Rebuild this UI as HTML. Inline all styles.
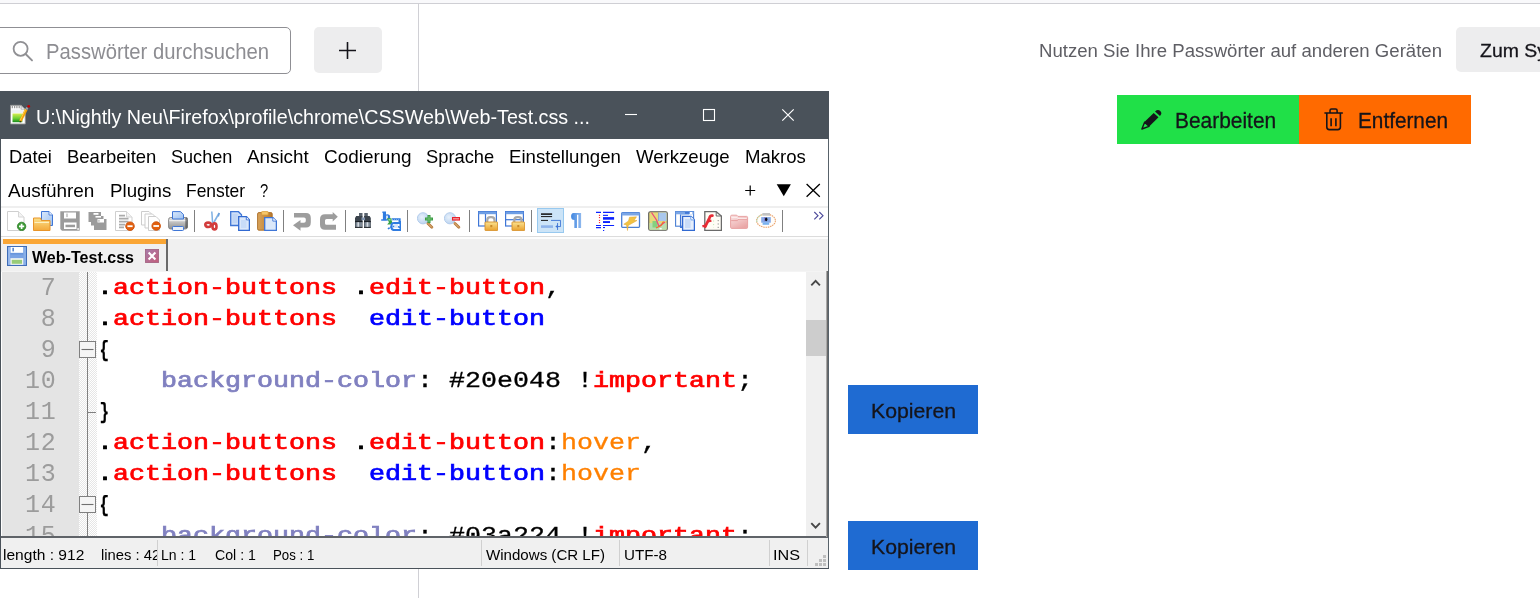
<!DOCTYPE html>
<html lang="de"><head><meta charset="utf-8"><title>about:logins</title>
<style>
html,body{margin:0;padding:0}
body{width:1540px;height:598px;overflow:hidden;background:#fff;position:relative;font-family:"Liberation Sans",sans-serif}
#root{position:absolute;left:0;top:0;width:1540px;height:598px;overflow:hidden;will-change:transform}
.abs{position:absolute}
.t{position:absolute;white-space:pre;transform-origin:0 0}
.topstrip{position:absolute;left:0;top:0;width:1540px;height:3px;background:#f9f9fb}
.topline{position:absolute;left:0;top:3px;width:1540px;height:1px;background:#cfcfd4}
.vline{position:absolute;left:418px;top:4px;width:1px;height:594px;background:#d0d0d5}
.search{position:absolute;left:-6px;top:27px;width:295px;height:45px;border:1px solid #8f8f94;border-radius:5px;background:#fff}
.plusbtn{position:absolute;left:314px;top:27px;width:68px;height:46px;border-radius:5px;background:#ededee}
.syncbtn{position:absolute;left:1456px;top:27px;width:100px;height:45px;border-radius:5px;background:#ededee}
#npp{position:absolute;left:0;top:0;width:830px;height:598px}
.titlebar{position:absolute;left:0;top:91px;width:829px;height:48px;background:#4a525a}
.menubar{position:absolute;left:1px;top:139px;width:827px;height:68px;background:#fff}
.toolbar{position:absolute;left:1px;top:206px;width:827px;height:31px;background:#fff;border-top:2px solid #efefef;border-bottom:1px solid #dcdcdc;box-sizing:border-box}
.tabbar{position:absolute;left:1px;top:237px;width:827px;height:35px;background:#f0f0f0;border-top:2px solid #fdfdfd;border-bottom:1px solid #f4f4f4;box-sizing:border-box}
.tab{position:absolute;left:3px;top:239px;width:164px;height:32px;background:#f0f0f0}
.taborange{position:absolute;left:3px;top:239px;width:164px;height:5px;background:#faa635}
.tabright{position:absolute;left:166px;top:239px;width:1.5px;height:32px;background:#6a6a6a}
.editor{position:absolute;left:2px;top:272px;width:804px;height:265px;background:#fff;overflow:hidden}
.lnmargin{position:absolute;left:0;top:0;width:77px;height:265px;background:#e4e4e4}
.foldmargin{position:absolute;left:77px;top:0;width:18px;height:265px;background:repeating-conic-gradient(#ffffff 0% 25%,#e6e6e6 0% 50%) 0 0/2px 2px}
.foldline{position:absolute;left:85px;top:0;width:1px;height:265px;background:#808080}
.ln{position:absolute;left:0;width:54.6px;height:31px;line-height:31px;text-align:right;font-family:"Liberation Mono",monospace;font-size:25px;letter-spacing:0.8px;color:#9c9c9c}
.cl{position:absolute;left:95px;height:31px;line-height:31px;white-space:pre;font-family:"Liberation Mono",monospace;font-size:21.5px;transform:scaleX(1.2401);transform-origin:0 0}
.cl .r{-webkit-text-stroke:0.3px currentColor}
.cl b{font-weight:400;-webkit-text-stroke:0.72px currentColor}
.cl b.br{display:inline-block;font-weight:700;-webkit-text-stroke:0.25px currentColor;transform:translateX(0.2px) scaleX(0.6);transform-origin:35% 50%}
.vscroll{position:absolute;left:806px;top:272px;width:20px;height:265px;background:#f0f0f0}
.vthumb{position:absolute;left:806px;top:320px;width:19.5px;height:35.6px;background:#cdcdcd}
.statusline{position:absolute;left:1px;top:536px;width:828px;height:2px;background:#5f6368}
.statusbar{position:absolute;left:1px;top:538px;width:828px;height:30px;background:#f0f0f0}
.bl{position:absolute;left:0;top:139px;width:1px;height:430px;background:#4a525a}
.br1{position:absolute;left:826px;top:271px;width:1px;height:266px;background:#a8a8a8}
.br2{position:absolute;left:827px;top:271px;width:1px;height:266px;background:#6a6a6a}
.br3{position:absolute;left:828px;top:139px;width:1px;height:430px;background:#58626a}
.bb{position:absolute;left:0;top:567.5px;width:829px;height:1.5px;background:#4a525a}
</style></head>
<body>
<div id="root"><div class="topstrip"></div><div class="topline"></div><div class="vline"></div><div class="search"></div><svg class="abs" style="left:12px;top:39.5px" width="22" height="22" viewBox="0 0 22 22"><circle cx="8.6" cy="8.8" r="7" fill="none" stroke="#909094" stroke-width="1.8"/><path d="M13.6 14 L20 20.4" stroke="#909094" stroke-width="1.9" stroke-linecap="round"/></svg><span class="t" style="left:46px;top:39px;line-height:25px;font-size:22.2px;color:#8d8d92;transform:scaleX(0.9132);">Passwörter durchsuchen</span><div class="plusbtn"></div><svg class="abs" style="left:339px;top:42px" width="17" height="17" viewBox="0 0 17 17"><path d="M8.5 0.5V16.5M0.5 8.5H16.5" stroke="#15141a" stroke-width="1.6" stroke-linecap="round"/></svg><span class="t" style="left:1039px;top:40px;line-height:21px;font-size:18.9px;color:#5e5e64;transform:scaleX(0.9841);">Nutzen Sie Ihre Passwörter auf anderen Geräten</span><div class="syncbtn"></div><span class="t" style="left:1480px;top:40px;line-height:21px;font-size:18.9px;color:#15141a;transform:scaleX(1.0295);-webkit-text-stroke:0.3px #15141a;">Zum Sy</span><div class="abs" style="left:1117px;top:95px;width:182px;height:48.6px;background:#20e048"></div><div class="abs" style="left:1299px;top:95px;width:172px;height:48.6px;background:#ff6a00"></div><span class="t" style="left:1175px;top:108px;line-height:25px;font-size:22.2px;color:#15141a;transform:scaleX(0.9429);-webkit-text-stroke:0.3px #15141a;">Bearbeiten</span><span class="t" style="left:1357.5px;top:108px;line-height:25px;font-size:22.2px;color:#15141a;transform:scaleX(0.9354);-webkit-text-stroke:0.3px #15141a;">Entfernen</span><svg class="abs" style="left:1135px;top:103px" width="35" height="32" viewBox="0 0 35 32"><path d="M9.4 19L18.7 9.9L23.5 14.2L14.2 23.5Z" fill="#15141a"/><path d="M9.6 19.2L6.9 26L14 23.3Z" fill="none" stroke="#15141a" stroke-width="1.4" stroke-linejoin="round"/><path d="M20 8.4L25 13Q27.6 10.4 25.3 8.1Q23 5.8 20 8.4Z" fill="#15141a"/></svg><svg class="abs" style="left:1318px;top:103px" width="35" height="32" viewBox="0 0 35 32"><path d="M7 10H24.3" stroke="#15141a" stroke-width="1.6" stroke-linecap="round"/><path d="M12 10V7.6Q12 6.1 13.5 6.1H17.6Q19.1 6.1 19.1 7.6V10" fill="none" stroke="#15141a" stroke-width="1.5"/><path d="M8.8 10V24Q8.8 26.6 11.4 26.6H19.8Q22.4 26.6 22.4 24V10" fill="none" stroke="#15141a" stroke-width="1.6"/><path d="M13.1 15.2V23.2M17.9 15.2V23.2" stroke="#15141a" stroke-width="1.6"/></svg><div class="abs" style="left:848px;top:385px;width:130px;height:49px;background:#1f6bd2"></div><span class="t" style="left:871px;top:400px;line-height:22px;font-size:20.4px;color:#15141a;transform:scaleX(1.0413);-webkit-text-stroke:0.3px #15141a;">Kopieren</span><div class="abs" style="left:848px;top:521px;width:130px;height:49px;background:#1f6bd2"></div><span class="t" style="left:871px;top:536px;line-height:22px;font-size:20.4px;color:#15141a;transform:scaleX(1.0413);-webkit-text-stroke:0.3px #15141a;">Kopieren</span><div id="npp"><div class="titlebar"></div><svg class="abs" style="left:10px;top:104px" width="21" height="21" viewBox="0 0 21 21"><defs><linearGradient id="gN" x1="0" y1="0" x2="0" y2="1"><stop offset="0" stop-color="#d6ec52"/><stop offset="0.55" stop-color="#6fd033"/><stop offset="1" stop-color="#168a1c"/></linearGradient></defs><path d="M0.5 1.3H11L15.3 5.5V20H0.5Z" fill="#fff" stroke="#8d8d8d" stroke-width="0.9"/><path d="M11 1.3V5.5H15.3Z" fill="#e2e2e2" stroke="#8d8d8d" stroke-width="0.7"/><path d="M2.3 1.9V4.3M4.6 1.9V4.3M6.9 1.9V4.3M9.2 1.9V4.3" stroke="#9a9a9a" stroke-width="1.3"/><rect x="1.4" y="5.5" width="13" height="3.6" fill="#eef1f4"/><rect x="2.5" y="9.5" width="9.8" height="8.7" fill="url(#gN)"/><path d="M10.4 17.2L16.3 5.4" stroke="#f2a20a" stroke-width="2.8"/><path d="M10 16.6L15.6 5.2" stroke="#fbd04a" stroke-width="0.9"/><path d="M16.3 5.4L17.3 3.5" stroke="#9aa0ac" stroke-width="2.4"/><circle cx="18.7" cy="2.3" r="1.4" fill="#c40000"/><path d="M9.7 18.6L11.4 17.9L9.9 16.4Z" fill="#3a2a10"/></svg><span class="t" style="left:36px;top:106px;line-height:22px;font-size:20.4px;color:#fff;transform:scaleX(0.9656);">U:\Nightly Neu\Firefox\profile\chrome\CSSWeb\Web-Test.css ...</span><svg class="abs" style="left:600px;top:91px" width="229" height="48" viewBox="0 0 229 48"><path d="M25 23.5H37" stroke="#fff" stroke-width="1.1"/><rect x="103.5" y="18.5" width="11" height="11" fill="none" stroke="#fff" stroke-width="1.1"/><path d="M182.3 18.3L193.7 29.7M193.7 18.3L182.3 29.7" stroke="#fff" stroke-width="1.2"/></svg><div class="menubar"></div><span class="t" style="left:9px;top:147px;line-height:20px;font-size:17.8px;color:#000;transform:scaleX(1.0309);">Datei</span><span class="t" style="left:67.4px;top:147px;line-height:20px;font-size:17.8px;color:#000;transform:scaleX(1.0393);">Bearbeiten</span><span class="t" style="left:171.3px;top:147px;line-height:20px;font-size:17.8px;color:#000;transform:scaleX(1.0164);">Suchen</span><span class="t" style="left:247.3px;top:147px;line-height:20px;font-size:17.8px;color:#000;transform:scaleX(1.0581);">Ansicht</span><span class="t" style="left:323.7px;top:147px;line-height:20px;font-size:17.8px;color:#000;transform:scaleX(1.0663);">Codierung</span><span class="t" style="left:426px;top:147px;line-height:20px;font-size:17.8px;color:#000;transform:scaleX(1.0297);">Sprache</span><span class="t" style="left:509.4px;top:147px;line-height:20px;font-size:17.8px;color:#000;transform:scaleX(1.0479);">Einstellungen</span><span class="t" style="left:636.3px;top:147px;line-height:20px;font-size:17.8px;color:#000;transform:scaleX(1.0456);">Werkzeuge</span><span class="t" style="left:745px;top:147px;line-height:20px;font-size:17.8px;color:#000;transform:scaleX(1.0447);">Makros</span><span class="t" style="left:8.2px;top:181px;line-height:20px;font-size:17.8px;color:#000;transform:scaleX(1.0658);">Ausführen</span><span class="t" style="left:109.9px;top:181px;line-height:20px;font-size:17.8px;color:#000;transform:scaleX(1.0527);">Plugins</span><span class="t" style="left:186.3px;top:181px;line-height:20px;font-size:17.8px;color:#000;transform:scaleX(0.9804);">Fenster</span><span class="t" style="left:260.4px;top:181px;line-height:20px;font-size:17.8px;color:#000;transform:scaleX(0.8291);">?</span><svg class="abs" style="left:740px;top:180px" width="86" height="22" viewBox="0 0 86 22"><path d="M10.2 5.5V15.5M5.2 10.5H15.2" stroke="#000" stroke-width="1.2"/><path d="M36.7 4.3H50.9L43.8 16.3Z" fill="#000"/><path d="M66.6 4L79.8 16.8M79.8 4L66.6 16.8" stroke="#000" stroke-width="1.3"/></svg><div class="toolbar"></div><svg width="0" height="0" style="position:absolute"><defs>
<linearGradient id="gF" x1="0" y1="0" x2="0" y2="1"><stop offset="0" stop-color="#fbe08a"/><stop offset="1" stop-color="#f3a93a"/></linearGradient>
<linearGradient id="gB" x1="0" y1="0" x2="1" y2="1"><stop offset="0" stop-color="#dbe9fb"/><stop offset="1" stop-color="#9cc0f0"/></linearGradient>
<linearGradient id="gP" x1="0" y1="0" x2="0" y2="1"><stop offset="0" stop-color="#e6e6e6"/><stop offset="0.5" stop-color="#b9b9b9"/><stop offset="1" stop-color="#8f8f8f"/></linearGradient>
<linearGradient id="gL" x1="0" y1="0" x2="0" y2="1"><stop offset="0" stop-color="#fbe391"/><stop offset="1" stop-color="#e9a02c"/></linearGradient>
<linearGradient id="gC" x1="0" y1="0" x2="1" y2="0"><stop offset="0" stop-color="#d9a35a"/><stop offset="1" stop-color="#b87a2e"/></linearGradient>
<linearGradient id="gQ" x1="0" y1="0" x2="1" y2="0"><stop offset="0" stop-color="#3f86e0"/><stop offset="1" stop-color="#8fb8ee"/></linearGradient>
<radialGradient id="gZ" cx="0.4" cy="0.4" r="0.7"><stop offset="0" stop-color="#e8f1fb"/><stop offset="1" stop-color="#b5cfee"/></radialGradient>
</defs></svg>
<svg class="abs" style="left:7px;top:211px" width="20" height="20" viewBox="0 0 20 20"><path d="M0.5 0.5H11.5L17 6V19.5H0.5Z" fill="#fff" stroke="#cfcfcf"/><path d="M11.5 0.5V6H17" fill="#f4f4f4" stroke="#d6d6d6"/><circle cx="14.6" cy="15.4" r="4.2" fill="#3d9b35"/><circle cx="14.6" cy="15.4" r="4.2" fill="none" stroke="#2d7d28" stroke-width="0.8"/><path d="M14.6 12.8V18M12 15.4H17.2" stroke="#fff" stroke-width="1.7"/></svg>
<svg class="abs" style="left:33px;top:211px" width="20" height="20" viewBox="0 0 20 20"><path d="M8.5 0.5H16L19.5 4V14.5H8.5Z" fill="url(#gB)" stroke="#3f76d6"/><path d="M16 0.5V4H19.5" fill="#eef4fd" stroke="#3f76d6" stroke-width="0.8"/><path d="M0.5 7H7.5L8.5 9.5H17V19.5H0.5Z" fill="url(#gF)" stroke="#e8952a"/><path d="M1.5 11.5H16" stroke="#fdf0c0" stroke-width="1"/></svg>
<svg class="abs" style="left:60px;top:211px" width="20" height="20" viewBox="0 0 20 20"><path d="M0.3 0.3H19.7V19.7H2L0.3 18Z" fill="#9b9b9b"/><rect x="4" y="1.5" width="12" height="6" fill="#fff"/><rect x="6.5" y="2.5" width="1" height="3.6" fill="#9b9b9b"/><rect x="4" y="11.5" width="12.5" height="6.5" fill="#fff"/><rect x="5.5" y="13.7" width="9.5" height="2.5" fill="#9b9b9b"/><rect x="17.3" y="17.2" width="1.6" height="1.6" fill="#fff"/></svg>
<svg class="abs" style="left:87.5px;top:211px" width="19" height="20" viewBox="0 0 19 20"><path d="M0.5 1H13V5H15.5V8H18.5V19H6V14.5H3V11H0.5Z" fill="#9b9b9b"/><rect x="5.5" y="2" width="5" height="1.8" fill="#fff"/><rect x="7.5" y="5" width="5.5" height="1.6" fill="#fff"/><rect x="9.5" y="8" width="6.5" height="3.5" fill="#fff"/><rect x="10.5" y="8.8" width="0.9" height="2" fill="#9b9b9b"/></svg>
<svg class="abs" style="left:115px;top:211px" width="20" height="20" viewBox="0 0 20 20"><path d="M0.5 0.5H11.5L17 6V19.5H0.5Z" fill="#fff" stroke="#cfcfcf"/><path d="M11.5 0.5V6H17" fill="#f4f4f4" stroke="#d6d6d6"/><path d="M4 4.6H10M4 7.6H13.5M4 10.6H13.5M4 13.6H10M4 16.4H9" stroke="#ababab" stroke-width="1.6"/><circle cx="15" cy="15.2" r="4.3" fill="#e2600f"/><circle cx="15" cy="15.2" r="4.3" fill="none" stroke="#c94c06" stroke-width="0.8"/><path d="M12.4 15.2H17.6" stroke="#fff" stroke-width="1.8"/></svg>
<svg class="abs" style="left:141px;top:211px" width="20" height="20" viewBox="0 0 20 20"><path d="M0.5 0.5H8L11 3.5V14H0.5Z" fill="#fff" stroke="#cdcdcd"/><path d="M4 3H11.5L14.5 6V17H4Z" fill="#fff" stroke="#cdcdcd"/><path d="M7.5 5.5H15L18.5 9V19.5H7.5Z" fill="#fff" stroke="#cdcdcd"/><circle cx="15.2" cy="15" r="4.3" fill="#e2600f"/><circle cx="15.2" cy="15" r="4.3" fill="none" stroke="#c94c06" stroke-width="0.8"/><path d="M12.4 15H18" stroke="#fff" stroke-width="1.8"/></svg>
<svg class="abs" style="left:168px;top:211px" width="20" height="20" viewBox="0 0 20 20"><rect x="0.6" y="6.5" width="18.8" height="11.5" rx="2" fill="url(#gP)" stroke="#7f7f7f" stroke-width="0.9"/><path d="M4.5 8V0.6H12.5L15.5 3.6V8Z" fill="url(#gB)" stroke="#3f76d6"/><rect x="1.2" y="9" width="17.6" height="1.2" fill="#f4f4f4" opacity="0.8"/><rect x="4.5" y="15.5" width="11" height="4" rx="0.8" fill="#e9f1fc" stroke="#3f76d6"/><rect x="17.3" y="6.2" width="2.3" height="11" rx="1" fill="#3a3a3a" opacity="0.55"/></svg>
<svg class="abs" style="left:204px;top:211px" width="17" height="20" viewBox="0 0 17 20"><path d="M7.8 0.5L8.6 12" stroke="#7fb0e3" stroke-width="1.5"/><path d="M15.2 2L9.2 12.5" stroke="#7fb0e3" stroke-width="1.6"/><path d="M15.2 2L14.6 5.5" stroke="#5a93d6" stroke-width="1"/><ellipse cx="4.2" cy="13.8" rx="2.9" ry="2.2" fill="none" stroke="#d23c3c" stroke-width="2.6"/><ellipse cx="10.5" cy="15.4" rx="2" ry="3" fill="none" stroke="#d23c3c" stroke-width="2.6"/></svg>
<svg class="abs" style="left:230px;top:211px" width="20" height="20" viewBox="0 0 20 20"><path d="M0.7 0.7H8.5L11.5 3.7V14.5H0.7Z" fill="#cfe0f8" stroke="#3f76d6" stroke-width="1.3"/><path d="M8.7 5.7H16.5L19.4 8.7V19.4H8.7Z" fill="#dbe8fa" stroke="#3169d1" stroke-width="1.3"/><path d="M16.3 5.7V8.9H19.4" fill="#fff" stroke="#3169d1" stroke-width="0.9"/><rect x="11" y="9" width="5.5" height="8" fill="#c1d7f6" opacity="0.7"/><rect x="2.5" y="3" width="5" height="9" fill="#bad2f4" opacity="0.7"/></svg>
<svg class="abs" style="left:257px;top:211px" width="20" height="20" viewBox="0 0 20 20"><rect x="0.6" y="1.6" width="14.6" height="17.6" rx="1.3" fill="url(#gC)" stroke="#a96a22" stroke-width="0.9"/><rect x="4.6" y="0.4" width="6.6" height="3.6" rx="0.8" fill="#f6c66a" stroke="#d79a35" stroke-width="0.8"/><path d="M7.7 6.7H16L19.4 10V19.4H7.7Z" fill="#dbe8fa" stroke="#3f76d6" stroke-width="1.3"/><path d="M15.8 6.7V10.1H19.4" fill="#fff" stroke="#3f76d6" stroke-width="0.9"/></svg>
<svg class="abs" style="left:293px;top:213px" width="18" height="18" viewBox="0 0 18 18"><path d="M1 0H13Q17.8 0 17.8 5V9.5Q17.8 14.5 13 14.5H7.5V17.8L0 12.2L7.5 7V9.7H11Q12.8 9.7 12.8 8V6.2Q12.8 4.6 11 4.6H1Z" fill="#9d9d9d"/></svg>
<svg class="abs" style="left:320px;top:212px" width="18" height="18" viewBox="0 0 18 18"><path d="M12.7 0L17.8 4.7L12.7 9.6V6.9H6.6Q5 6.9 5 8.4V11.2Q5 12.7 6.6 12.7H16V17.8H5Q0 17.8 0 12.7V7.3Q0 2.3 5 2.3H12.7Z" fill="#9d9d9d"/></svg>
<svg class="abs" style="left:355px;top:213px" width="16" height="15" viewBox="0 0 16 15"><rect x="4" y="0" width="3.5" height="3.6" fill="#59636e"/><rect x="9.3" y="0" width="3.5" height="3.6" fill="#59636e"/><path d="M1.2 3H7.5V14.6H0V5Z" fill="#3b434c"/><path d="M14.6 3H9V14.6H15.8V5Z" fill="#3b434c"/><rect x="6.5" y="4.5" width="3.5" height="2.6" fill="#7f92ad"/><rect x="0" y="8" width="7.5" height="1.2" fill="#1d2227"/><rect x="9" y="8" width="6.8" height="1.2" fill="#1d2227"/><rect x="0.6" y="9.2" width="6.4" height="4.8" fill="#7c8793"/><rect x="9.5" y="9.2" width="5.8" height="4.8" fill="#7c8793"/><rect x="2.4" y="9.2" width="1.7" height="4.8" fill="#d5dbe2"/><rect x="11.6" y="9.2" width="1.7" height="4.8" fill="#d5dbe2"/><rect x="0" y="13.9" width="7.5" height="0.9" fill="#14181c"/><rect x="9" y="13.9" width="6.8" height="0.9" fill="#14181c"/></svg>
<svg class="abs" style="left:381px;top:211px" width="20" height="20" viewBox="0 0 20 20"><path d="M1.4 0.4H5V3.4Q9.2 2.6 9.2 6.3Q9.2 9.8 5 9.8H0.2V8.2H1.9V2H1.4Z" fill="#2f7be0"/><rect x="5" y="4.6" width="2" height="3.6" fill="#cfe0f8"/><path d="M5.8 7.2H10.6V9.6L11.4 11.4L9.6 13.6H6.2L8 11.2Z" fill="#38a348"/><path d="M7.5 8H9.5V9.5H7.5Z" fill="#9ad6a0"/><path d="M11 8.2H18.6V12H13Q10.5 12 10.5 14.3V16.6Q10.5 19 13 19H19.6V10" stroke="#2f7be0" stroke-width="2.1" fill="none"/><path d="M7 18Q11.5 13.6 19.6 16.6" stroke="#2f7be0" stroke-width="1.6" fill="none" stroke-dasharray="2 0.7"/><path d="M13.3 13H17V17H13.3Z" fill="#d9e6f9"/><path d="M11 8.6H18.6" stroke="#7fb0ee" stroke-width="1" stroke-dasharray="1 1"/></svg>
<svg class="abs" style="left:417px;top:212px" width="17" height="17" viewBox="0 0 17 17"><circle cx="6" cy="6.3" r="5.6" fill="url(#gZ)" stroke="#b4cdec" stroke-width="1"/><path d="M11 11.5L14.8 15.3" stroke="#b5793a" stroke-width="2.8" stroke-linecap="round"/><path d="M11 11.5L14.8 15.3" stroke="#e7c08d" stroke-width="1" stroke-linecap="round"/><path d="M12 3V11M8 7H16" stroke="#3c9c45" stroke-width="3"/><path d="M12 4V10M9 7H15" stroke="#6cc172" stroke-width="1.2"/></svg>
<svg class="abs" style="left:444px;top:212px" width="17" height="17" viewBox="0 0 17 17"><circle cx="6" cy="6.3" r="5.6" fill="url(#gZ)" stroke="#b4cdec" stroke-width="1"/><path d="M11 11.5L14.8 15.3" stroke="#b5793a" stroke-width="2.8" stroke-linecap="round"/><path d="M11 11.5L14.8 15.3" stroke="#e7c08d" stroke-width="1" stroke-linecap="round"/><rect x="8" y="5" width="8" height="3.6" fill="#e8232d"/><rect x="9" y="6" width="6" height="1.5" fill="#f48a8f"/></svg>
<svg class="abs" style="left:478px;top:211px" width="20" height="20" viewBox="0 0 20 20"><rect x="0.6" y="0.6" width="17.8" height="14.4" fill="#fff" stroke="#3f76d6" stroke-width="1.2"/><rect x="0.6" y="0.6" width="17.8" height="2.6" fill="#6f9fe4"/><path d="M7.5 3V15" stroke="#3f76d6" stroke-width="1.2"/><path d="M9.3 12V9Q9.3 6.2 12.3 6.2H13.5Q16.5 6.2 16.5 9V12" fill="none" stroke="#a9a9a9" stroke-width="2.2"/><rect x="7" y="11" width="12.6" height="8.6" rx="0.6" fill="url(#gL)" stroke="#d8922a" stroke-width="0.9"/><rect x="12.3" y="14" width="2" height="2.2" fill="#c98a2a"/></svg>
<svg class="abs" style="left:505px;top:211px" width="20" height="20" viewBox="0 0 20 20"><rect x="0.6" y="0.6" width="17.8" height="14.4" fill="#fff" stroke="#3f76d6" stroke-width="1.2"/><rect x="0.6" y="0.6" width="17.8" height="2.6" fill="#6f9fe4"/><path d="M0.6 8.7H18.4" stroke="#3f76d6" stroke-width="1.2"/><path d="M9.3 12V9Q9.3 6.2 12.3 6.2H13.5Q16.5 6.2 16.5 9V12" fill="none" stroke="#a9a9a9" stroke-width="2.2"/><rect x="7" y="11" width="12.6" height="8.6" rx="0.6" fill="url(#gL)" stroke="#d8922a" stroke-width="0.9"/><rect x="12.3" y="14" width="2" height="2.2" fill="#c98a2a"/></svg>
<div class="abs" style="left:537px;top:208px;width:27px;height:25px;box-sizing:border-box;background:#cce4f7;border:1px solid #98c9ef"></div>
<svg class="abs" style="left:541px;top:211px" width="20" height="20" viewBox="0 0 20 20"><rect x="0" y="2.3" width="11.1" height="1.6" fill="#1a1a1a"/><rect x="0" y="5" width="11.1" height="1.1" fill="#2a2a2a"/><rect x="0" y="8.9" width="7" height="1" fill="#1a1a1a"/><rect x="0" y="14.3" width="12" height="2.6" fill="#8eb4ea"/><path d="M10 9.4H19.6V15.55H16.5" fill="none" stroke="#3f76d6" stroke-width="0.95"/><path d="M14.3 15.55L17 13.6V17.5Z" fill="#3f76d6"/><path d="M16.55 12V19" stroke="#3f76d6" stroke-width="0.9"/></svg>
<svg class="abs" style="left:570px;top:213px" width="12" height="16" viewBox="0 0 12 16"><path d="M3.5 0H11.1V14.9H8.4V1.8H7V14.9H4.35V7Q1.1 7 1.1 3.5Q1.1 0 3.5 0Z" fill="url(#gQ)"/></svg>
<svg class="abs" style="left:596px;top:211px" width="19" height="21" viewBox="0 0 19 21"><path d="M0 1.4H5M7 1.4H18.1M0 14.5H5M7 14.5H18.1M0 16.55H5" stroke="#0a22ff" stroke-width="1.15"/><rect x="7" y="3.8" width="5" height="1.1" fill="#0a22ff"/><rect x="7" y="6.1" width="11.1" height="2.6" fill="#0a22ff"/><rect x="7" y="10.1" width="7" height="1.9" fill="#0a22ff"/><rect x="7" y="16" width="2" height="1.1" fill="#0a22ff"/><rect x="7" y="19" width="1.2" height="1" fill="#0a22ff"/><rect x="2.9" y="3.8" width="1.2" height="1.1" fill="#ff1a1a"/><rect x="2.9" y="6.1" width="1.2" height="1" fill="#ff1a1a"/><rect x="2.9" y="8.9" width="1.2" height="1" fill="#ff1a1a"/><rect x="2.9" y="11.1" width="1.2" height="1" fill="#ff1a1a"/></svg>
<svg class="abs" style="left:621px;top:212px" width="20" height="19" viewBox="0 0 20 19"><rect x="0.7" y="0.7" width="17.8" height="14.6" rx="0.8" fill="#fff" stroke="#4a7fd4" stroke-width="1.3"/><rect x="0.7" y="0.7" width="17.8" height="2.8" fill="#7aa6e6"/><path d="M8.5 5.2L15.5 4.8L13 8.5L16 8.5L7.2 13.5L6.5 18.5L5.5 13L2.8 12.2L7.5 9Z" fill="#f2c243" stroke="#dca52c" stroke-width="0.5"/></svg>
<svg class="abs" style="left:648px;top:211px" width="20" height="20" viewBox="0 0 20 20"><rect x="0.7" y="0.7" width="18.6" height="18.6" rx="1.5" fill="#e7d97a" stroke="#5a5a5a" stroke-width="1.1"/><rect x="10.5" y="1.5" width="8" height="8.5" fill="#a9c7ec"/><rect x="1.5" y="12" width="17" height="6.8" fill="#b9ddb0"/><rect x="4.5" y="10" width="5" height="6.5" fill="#86d07f"/><path d="M3.5 1.5L8.5 9L11 15.5L17 11" fill="none" stroke="#ee4a7a" stroke-width="1.3"/><path d="M8 17L13 14.5L15.5 10.5" fill="none" stroke="#f26a2e" stroke-width="1.2"/><rect x="11.5" y="17" width="2.2" height="1.4" fill="#fff"/><path d="M10.5 1.5V10" stroke="#7f9fd0" stroke-width="0.8"/></svg>
<svg class="abs" style="left:675px;top:211px" width="20" height="20" viewBox="0 0 20 20"><rect x="0.6" y="0.6" width="18" height="14.6" fill="#fff" stroke="#4a7fd4" stroke-width="1.1"/><rect x="0.6" y="0.6" width="18" height="2.7" fill="#7aa6e6"/><rect x="10" y="1" width="4.6" height="1.8" fill="#3f76d6"/><rect x="14.8" y="1" width="2.6" height="2.2" fill="#fff"/><path d="M5.6 3.3V16.4H8" stroke="#3f76d6" stroke-width="1.3" fill="none"/><path d="M5.6 3.6H14" stroke="#9fc0ee" stroke-width="1"/><path d="M7.6 5.3H16L19.4 8.7V19.3H7.6Z" fill="#e6effc" stroke="#3169d1" stroke-width="1.3"/><path d="M15.8 5.3V8.9H19.4" fill="#fff" stroke="#5a94e6" stroke-width="0.9"/><rect x="10" y="8" width="5.6" height="9" fill="#c3d8f7" opacity="0.85"/></svg>
<svg class="abs" style="left:702px;top:211px" width="20" height="20" viewBox="0 0 20 20"><path d="M2.8 0.7H14.2L19.4 5V19.3H2.8Z" fill="#fffdf6" stroke="#6a6a6a" stroke-width="1.3"/><path d="M14.2 0.7V5H19.4" fill="none" stroke="#6a6a6a" stroke-width="1"/><path d="M10.4 4.6Q8.2 4.2 7.4 7L3.2 15.6" fill="none" stroke="#e62d36" stroke-width="2.8" stroke-linecap="round"/><path d="M0.4 15.4L4.4 14.2M5.6 10.4L9.4 9.6" stroke="#e62d36" stroke-width="2.2"/><path d="M16.2 9V17" stroke="#8a8a8a" stroke-width="1" stroke-dasharray="1.2 2.2"/><path d="M11.6 9.5V17" stroke="#bfe3b0" stroke-width="1" stroke-dasharray="1 2.6"/></svg>
<svg width="0" height="0" style="position:absolute"><defs><linearGradient id="gR" x1="0" y1="0" x2="0.6" y2="1"><stop offset="0" stop-color="#fae4e4"/><stop offset="1" stop-color="#eaa7a7"/></linearGradient></defs></svg>
<svg class="abs" style="left:730px;top:214px" width="19" height="15" viewBox="0 0 19 15"><path d="M0.6 2.4Q0.6 1.2 1.8 1.2H6.8L8 2.4H16.6Q17.6 2.4 17.6 3.6V13.2Q17.6 14.4 16.6 14.4H1.8Q0.6 14.4 0.6 13.2Z" fill="url(#gR)" stroke="#e8a3a3" stroke-width="1"/><path d="M1.2 6.6H7.2L8.8 5.2H17" fill="none" stroke="#e59a9a" stroke-width="0.9"/><path d="M1.4 3.6H7L8 4.4H16.8" fill="none" stroke="#fdf1f1" stroke-width="0.9"/></svg>
<svg class="abs" style="left:756px;top:213px" width="20" height="16" viewBox="0 0 20 16"><ellipse cx="10" cy="7.7" rx="9.4" ry="6.6" fill="#fffdfa" stroke="#eaa56f" stroke-width="1.1" stroke-dasharray="1.6 0.7"/><path d="M0.8 9Q0.6 2.6 8 1.2" fill="none" stroke="#b5dcb8" stroke-width="1.2" stroke-dasharray="1.5 1"/><rect x="6.4" y="0" width="7.6" height="2.7" fill="#c3c3c3"/><rect x="5.2" y="4.1" width="9.6" height="5.6" fill="#86a9e6"/><rect x="6.6" y="9.4" width="6.6" height="2.4" fill="#79b2f0"/><rect x="8" y="4.2" width="1.5" height="4" fill="#7b68c8" opacity="0.7"/><ellipse cx="10.2" cy="6.3" rx="1.2" ry="1.9" fill="#0d0d18"/></svg>
<div class="abs" style="left:194px;top:210px;width:1.3px;height:22px;background:#808080"></div>
<div class="abs" style="left:283px;top:210px;width:1.3px;height:22px;background:#808080"></div>
<div class="abs" style="left:345px;top:210px;width:1.3px;height:22px;background:#808080"></div>
<div class="abs" style="left:407px;top:210px;width:1.3px;height:22px;background:#808080"></div>
<div class="abs" style="left:469px;top:210px;width:1.3px;height:22px;background:#808080"></div>
<div class="abs" style="left:531px;top:210px;width:1.3px;height:22px;background:#808080"></div>
<div class="abs" style="left:782px;top:210px;width:1.3px;height:22px;background:#808080"></div>
<svg class="abs" style="left:813px;top:211px" width="12" height="10" viewBox="0 0 12 10"><path d="M1.3 1L5 4.7L1.3 8.4M6.3 1L10 4.7L6.3 8.4" fill="none" stroke="#4d4a9b" stroke-width="1.15"/></svg><div class="tabbar"></div><div class="tab"></div><div class="taborange"></div><div class="tabright"></div><svg class="abs" style="left:7px;top:246px" width="20" height="20" viewBox="0 0 20 20"><rect x="0.5" y="0.5" width="19" height="19" fill="#7aa3e4" stroke="#3f6db8"/><rect x="1.3" y="1.3" width="1.6" height="17.4" fill="#a9c6f0" opacity="0.8"/><rect x="3.6" y="1" width="12.6" height="5.8" fill="#fff"/><rect x="5.4" y="1.8" width="1.5" height="3.6" fill="#4a7ed0"/><rect x="3.4" y="7.4" width="13" height="1" fill="#5f8fd8"/><rect x="3.4" y="12.2" width="13" height="6.6" fill="#f6f8f4"/><rect x="4.7" y="13.8" width="10.4" height="4" fill="#97cb78"/><rect x="16.6" y="1.2" width="2.4" height="17.6" fill="#8fb3ea" opacity="0.7"/></svg><svg class="abs" style="left:145px;top:249px" width="14" height="14" viewBox="0 0 14 14"><defs><linearGradient id="gX" x1="0" y1="0" x2="1" y2="1"><stop offset="0" stop-color="#a67cab"/><stop offset="1" stop-color="#c45d79"/></linearGradient></defs><rect x="0.4" y="0.4" width="13.2" height="13.2" fill="url(#gX)" stroke="#a0607f" stroke-width="0.8"/><path d="M3.6 3.6L10.4 10.4M10.4 3.6L3.6 10.4" stroke="#fff" stroke-width="2.1"/></svg><span class="t" style="left:32.3px;top:248px;line-height:19px;font-size:16.6px;color:#000;font-weight:700;transform:scaleX(0.9674);">Web-Test.css</span><div class="editor"><div class="lnmargin"></div><div class="foldmargin"></div><div class="foldline"></div><div class="ln" style="top:1px">7</div><div class="cl" style="top:1px"><b style="color:#000">.</b><b style="color:#ff0000">action-buttons</b><b style="color:#000"> </b><b style="color:#000">.</b><b style="color:#ff0000">edit-button</b><span class="r" style="color:#000">,</span></div><div class="ln" style="top:32px">8</div><div class="cl" style="top:32px"><b style="color:#000">.</b><b style="color:#ff0000">action-buttons</b><b style="color:#000">  </b><b style="color:#0000ff">edit-button</b></div><div class="ln" style="top:63px">9</div><div class="cl" style="top:63px"><b class="br" style="color:#000">{</b></div><div class="ln" style="top:94px">10</div><div class="cl" style="top:94px"><span class="r" style="color:#000">    </span><b style="color:#8080c0">background-color</b><span class="r" style="color:#000">:</span><span class="r" style="color:#000"> </span><span class="r" style="color:#000">#20e048</span><span class="r" style="color:#000"> </span><span class="r" style="color:#000">!</span><b style="color:#ff0000">important</b><span class="r" style="color:#000">;</span></div><div class="ln" style="top:125px">11</div><div class="cl" style="top:125px"><b class="br" style="color:#000">}</b></div><div class="ln" style="top:156px">12</div><div class="cl" style="top:156px"><b style="color:#000">.</b><b style="color:#ff0000">action-buttons</b><b style="color:#000"> </b><b style="color:#000">.</b><b style="color:#ff0000">edit-button</b><span class="r" style="color:#000">:</span><span class="r" style="color:#ff8000">hover</span><span class="r" style="color:#000">,</span></div><div class="ln" style="top:187px">13</div><div class="cl" style="top:187px"><b style="color:#000">.</b><b style="color:#ff0000">action-buttons</b><b style="color:#000">  </b><b style="color:#0000ff">edit-button</b><span class="r" style="color:#000">:</span><span class="r" style="color:#ff8000">hover</span></div><div class="ln" style="top:218px">14</div><div class="cl" style="top:218px"><b class="br" style="color:#000">{</b></div><div class="ln" style="top:249px">15</div><div class="cl" style="top:249px"><span class="r" style="color:#000">    </span><b style="color:#8080c0">background-color</b><span class="r" style="color:#000">:</span><span class="r" style="color:#000"> </span><span class="r" style="color:#000">#03a224</span><span class="r" style="color:#000"> </span><span class="r" style="color:#000">!</span><b style="color:#ff0000">important</b><span class="r" style="color:#000">;</span></div><svg class="abs" style="left:77px;top:69px" width="17" height="17" viewBox="0 0 17 17"><rect x="0.5" y="0.5" width="16" height="16" fill="#f5f5f5" stroke="#808080"/><path d="M2.5 8.5H14.5" stroke="#707070" stroke-width="1.1"/></svg><svg class="abs" style="left:77px;top:224px" width="17" height="17" viewBox="0 0 17 17"><rect x="0.5" y="0.5" width="16" height="16" fill="#f5f5f5" stroke="#808080"/><path d="M2.5 8.5H14.5" stroke="#707070" stroke-width="1.1"/></svg><div class="abs" style="left:86px;top:140px;width:8px;height:1px;background:#808080"></div></div><div class="vscroll"></div><div class="vthumb"></div><svg class="abs" style="left:806px;top:272px" width="20" height="265" viewBox="0 0 20 265"><path d="M5.3 13.4L9.6 8.9L13.9 13.4" fill="none" stroke="#484848" stroke-width="1.9"/><path d="M5.3 251.2L9.6 255.7L13.9 251.2" fill="none" stroke="#484848" stroke-width="1.9"/></svg><div class="statusline"></div><div class="statusbar"></div><span class="t" style="left:3.3px;top:546px;line-height:17px;font-size:15px;color:#000;transform:scaleX(1.0369);">length : 912</span><div class="abs" style="left:0;top:0;width:156.5px;height:598px;overflow:hidden"><span class="t" style="left:101px;top:546px;line-height:17px;font-size:15px;color:#000;transform:scaleX(0.9859);">lines : 42</span></div><span class="t" style="left:161px;top:546px;line-height:17px;font-size:15px;color:#000;transform:scaleX(0.9326);">Ln : 1</span><span class="t" style="left:214.6px;top:546px;line-height:17px;font-size:15px;color:#000;transform:scaleX(0.9433);">Col : 1</span><span class="t" style="left:273.3px;top:546px;line-height:17px;font-size:15px;color:#000;transform:scaleX(0.8843);">Pos : 1</span><span class="t" style="left:486px;top:546px;line-height:17px;font-size:15px;color:#000;transform:scaleX(1.0054);">Windows (CR LF)</span><span class="t" style="left:624px;top:546px;line-height:17px;font-size:15px;color:#000;transform:scaleX(1.0118);">UTF-8</span><span class="t" style="left:773px;top:546px;line-height:17px;font-size:15px;color:#000;transform:scaleX(1.0793);">INS</span><div class="abs" style="left:156.5px;top:540px;width:1px;height:26px;background:#d0d0d0"></div><div class="abs" style="left:481px;top:540px;width:1px;height:26px;background:#d0d0d0"></div><div class="abs" style="left:619px;top:540px;width:1px;height:26px;background:#d0d0d0"></div><div class="abs" style="left:769px;top:540px;width:1px;height:26px;background:#d0d0d0"></div><div class="abs" style="left:807px;top:540px;width:1px;height:26px;background:#d0d0d0"></div><div class="abs" style="left:823px;top:555px;width:3px;height:3px;background:#bfbfbf"></div><div class="abs" style="left:819px;top:559px;width:3px;height:3px;background:#bfbfbf"></div><div class="abs" style="left:823px;top:559px;width:3px;height:3px;background:#bfbfbf"></div><div class="abs" style="left:815px;top:563px;width:3px;height:3px;background:#bfbfbf"></div><div class="abs" style="left:819px;top:563px;width:3px;height:3px;background:#bfbfbf"></div><div class="abs" style="left:823px;top:563px;width:3px;height:3px;background:#bfbfbf"></div><div class="bl"></div><div class="br1"></div><div class="br2"></div><div class="br3"></div><div class="bb"></div></div></div>
</body></html>
